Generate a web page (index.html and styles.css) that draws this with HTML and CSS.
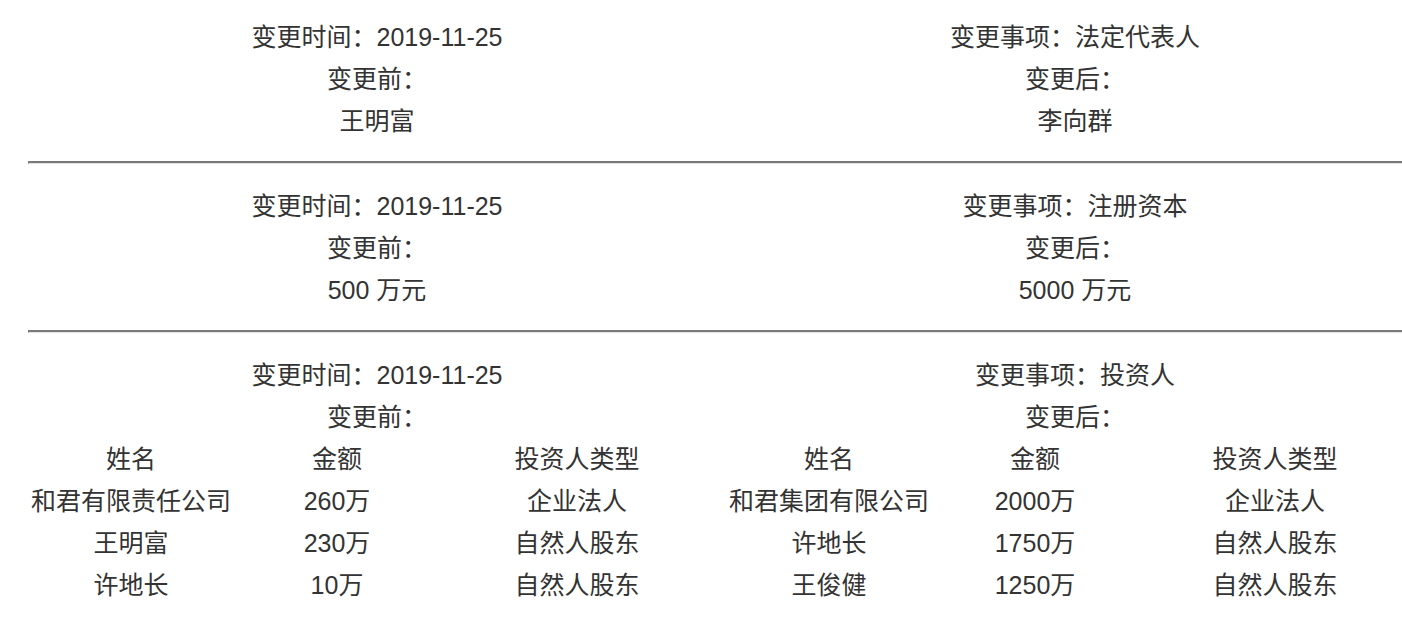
FILE: index.html
```html
<!DOCTYPE html>
<html lang="zh-CN">
<head>
    <meta charset="UTF-8">
    <title>变更记录</title>
    <link rel="stylesheet" href="styles.css">
</head>
<body>
<div id="changes">
    <div class="record">
        <div class="side">
            <p>变更时间：2019-11-25</p>
            <p>变更前：</p>
            <p>王明富</p>
        </div>
        <div class="side">
            <p>变更事项：法定代表人</p>
            <p>变更后：</p>
            <p>李向群</p>
        </div>
    </div>
    <hr>
    <div class="record">
        <div class="side">
            <p>变更时间：2019-11-25</p>
            <p>变更前：</p>
            <p>500 万元</p>
        </div>
        <div class="side">
            <p>变更事项：注册资本</p>
            <p>变更后：</p>
            <p>5000 万元</p>
        </div>
    </div>
    <hr>
    <div class="record">
        <div class="side">
            <p>变更时间：2019-11-25</p>
            <p>变更前：</p>
            <ul class="investors">
                <li>姓名</li><li>金额</li><li>投资人类型</li>
                <li>和君有限责任公司</li><li>260万</li><li>企业法人</li>
                <li>王明富</li><li>230万</li><li>自然人股东</li>
                <li>许地长</li><li>10万</li><li>自然人股东</li>
            </ul>
        </div>
        <div class="side">
            <p>变更事项：投资人</p>
            <p>变更后：</p>
            <ul class="investors">
                <li>姓名</li><li>金额</li><li>投资人类型</li>
                <li>和君集团有限公司</li><li>2000万</li><li>企业法人</li>
                <li>许地长</li><li>1750万</li><li>自然人股东</li>
                <li>王俊健</li><li>1250万</li><li>自然人股东</li>
            </ul>
        </div>
    </div>
</div>
</body>
</html>
```

FILE: styles.css
```css
* {
    margin: 0;
    padding: 0;
    list-style: none;
}

html, body {
    overflow: hidden;
}

body {
    font-family: "Liberation Sans", "Noto Sans CJK SC", sans-serif;
    font-size: 25px;
    color: #333;
    background: #fff;
}

#changes {
    width: 1396px;
    margin-left: 28px;
    padding-top: 16px;
}

.record {
    display: flex;
}

.side {
    width: 698px;
    text-align: center;
}

.side p {
    line-height: 42px;
}

#changes hr {
    height: 0;
    margin: 19px 0 21px;
    border: 0;
    border-top: 2px solid #7a7a7a;
    border-left: 1px solid #7a7a7a;
    border-bottom: 1px solid #e2e2e2;
}

.investors {
    display: grid;
    grid-template-columns: 206px 206px 274px;
}

.investors li {
    line-height: 42px;
    white-space: nowrap;
}
```
